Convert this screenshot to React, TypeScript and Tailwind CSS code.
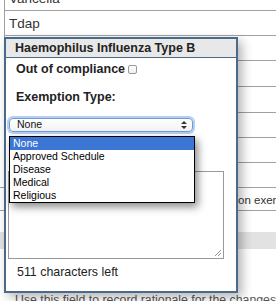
import React from 'react';

const rows = [
  { label: 'Varicella', h: 'h-[25px]' },
  { label: 'Tdap', h: 'h-[25px]' },
  { label: '', h: 'h-[25px]' },
  { label: '', h: 'h-[26px]' },
  { label: '', h: 'h-[26px]' },
  { label: '', h: 'h-[25px]' },
  { label: '', h: 'h-[25px]' },
];
const options = ['None', 'Approved Schedule', 'Disease', 'Medical', 'Religious'];

export default function App() {
  return (
    <div className="relative w-[276px] h-[301px] overflow-hidden bg-white font-['Liberation_Sans',Arial,sans-serif] text-[#333]">
      {/* Background table */}
      <div className="-mt-[14px] ml-[4px] border-l border-[#a0a0a0]">
        {rows.map((r, i) => (
          <div key={i} className={`${r.h} border-b border-[#a0a0a0] pl-[4px] pt-[3px] flex items-center text-[13.5px]`}>
            {r.label}
          </div>
        ))}
      </div>
      <div className="h-[25px] border-b border-[#a0a0a0]" />
      <div className="h-[23px] border-b border-[#a0a0a0] flex items-center pl-[185px] pt-[4px] text-[11.5px] whitespace-nowrap">
        Comment on exemption
      </div>
      <div className="h-[21px]" />
      <div className="h-[17px] bg-[#e2e2e2]" />
      <div className="mt-[42px] pl-[15px] text-[12.3px] text-[#555] whitespace-nowrap">
        Use this field to record rationale for the changes
      </div>

      {/* Popup */}
      <div className="absolute left-[4px] top-[37px] w-[234px] h-[256px] border-2 border-[#4a6a8a] bg-white shadow-[4px_4px_10px_rgba(0,0,0,0.3)]">
        <div className="h-[19px] bg-[#e8e8e8] border-b border-[#4a6a8a] pl-[9px] flex items-center font-bold text-[12.5px] text-[#222] whitespace-nowrap">
          Haemophilus Influenza Type B
        </div>
        <div className="mt-[3px] h-[16px] pl-[10px] flex items-center font-bold text-[12.5px] text-[#222]">
          Out of compliance
          <span className="ml-[3px] inline-block w-[9px] h-[9px] rounded-[2px] border border-[#999] bg-gradient-to-b from-white to-[#eee]" />
        </div>
        <div className="mt-[12px] h-[16px] pl-[10px] flex items-center font-bold text-[12.5px] text-[#222]">
          Exemption Type:
        </div>
        <div className="mt-[13px] ml-[3px] w-[184px] h-[14px] rounded-[4px] border border-[#6e9bd6] shadow-[0_0_0_2px_rgba(120,165,230,0.55)] bg-gradient-to-b from-white to-[#f2f2f2] flex items-center justify-between pl-[7px] pr-[5px]">
          <span className="text-[#111] text-[10.5px]">None</span>
          <svg width="6" height="8" viewBox="0 0 6 8">
            <path d="M3 0 L6 3 L0 3 Z M0 5 L6 5 L3 8 Z" fill="#333" />
          </svg>
        </div>
        <div className="mt-[39px] ml-[2px] w-[216px] h-[88px] border border-[#999] relative">
          <svg className="absolute right-[1px] bottom-[1px]" width="9" height="9" viewBox="0 0 9 9">
            <path d="M8 2 L2 8 M8 5 L5 8" stroke="#999" strokeWidth="1" />
          </svg>
        </div>
        <div className="mt-[5px] h-[16px] pl-[11px] flex items-center text-[12.4px] text-[#222]">
          511 characters left
        </div>

        {/* Open dropdown list */}
        <div className="absolute left-[3px] top-[97px] w-[186px] border border-black bg-white shadow-[3px_4px_8px_rgba(0,0,0,0.45)] text-[10.5px] text-black">
          {options.map((o, i) => (
            <div
              key={o}
              className={`h-[13px] leading-[13px] pl-[3px] whitespace-nowrap ${i === 0 ? 'bg-[#3b76d4] text-white' : ''}`}
            >
              {o}
            </div>
          ))}
        </div>
      </div>
    </div>
  );
}
